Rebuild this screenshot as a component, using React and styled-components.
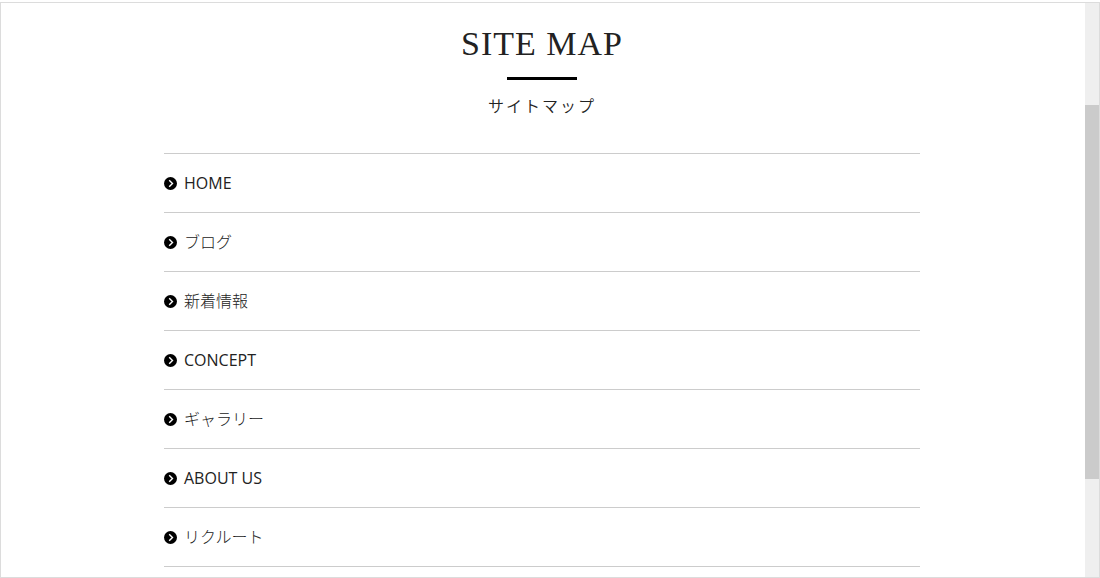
import styled, { createGlobalStyle } from "styled-components";

//Japanese labels are set in a lighter weight than the latin ones
const links = [
    { name: "HOME" },
    { name: "ブログ", light: true },
    { name: "新着情報", light: true },
    { name: "CONCEPT" },
    { name: "ギャラリー", light: true },
    { name: "ABOUT US" },
    { name: "リクルート", light: true },
];

const App = () => {
    return (
        <>
            <GlobalStyle />
            <Frame>
                <Content>
                    <Header>
                        <h1>SITE MAP</h1>
                        <p>サイトマップ</p>
                    </Header>
                    <nav aria-label="サイトマップ">
                        <LinkList>
                            {links.map(({ name, light }) => (
                                <li key={name}>
                                    <SiteLink href="#" $light={light}>
                                        <ArrowIcon />
                                        {name}
                                    </SiteLink>
                                </li>
                            ))}
                        </LinkList>
                    </nav>
                </Content>
                <ScrollTrack aria-hidden="true">
                    <ScrollThumb />
                </ScrollTrack>
            </Frame>
        </>
    )
}

const ArrowIcon = () => (
    <svg width="13" height="13" viewBox="0 0 13 13" aria-hidden="true">
        <circle cx="6.5" cy="6.5" r="6.5" fill="#000" />
        <path d="M5.2 3.2L8.5 6.5L5.2 9.8" fill="none" stroke="#fff" strokeWidth="1.4" />
    </svg>
)

export default App;

const GlobalStyle = createGlobalStyle`

    *{
        box-sizing:border-box;
    }

    body{
        margin:0;
        padding-top:2px;
        background-color:#fff;
        color:#222;
        font-family:"Open Sans","Noto Sans CJK JP",sans-serif;
        font-size:16px;
    }
`

const Frame=styled.div`
    display:flex;
    height:calc(100vh - 2px);
    border:1px solid #dcdcdc;
    overflow:hidden;
`

const Content=styled.main`
    flex:1;
    padding:20px 165px 0 163px;
`

const Header=styled.header`
    display:flex;
    flex-direction:column;
    align-items:center;
    padding-bottom:36px;

    h1{
        margin:0;
        font-family:"Liberation Serif","Times New Roman",serif;
        font-size:34px;
        font-weight:400;
        line-height:42px;
        letter-spacing:1px;
    }

    h1::after{
        content:"";
        display:block;
        width:70px;
        height:3px;
        margin:12px auto 0;
        background-color:#000;
    }

    p{
        margin:13px 0 0;
        font-family:"Noto Sans CJK JP",sans-serif;
        font-weight:350;
        line-height:24px;
        letter-spacing:2px;
    }
`

const LinkList=styled.ul`
    margin:0;
    padding:0;
    list-style:none;
    border-top:1px solid #ccc;

    li{
        border-bottom:1px solid #ccc;
    }
`

const SiteLink=styled.a`
    display:flex;
    align-items:center;
    gap:7px;
    padding:17px 0;
    line-height:24px;
    font-weight:${(props)=>(props.$light ? 300:400)};
    color:inherit;
    text-decoration:none;
`

const ScrollTrack=styled.div`
    display:grid;
    grid-template-rows:102fr 374fr 98fr;
    width:14px;
    background-color:#efefef;
`

const ScrollThumb=styled.div`
    grid-row:2;
    background-color:#cbcbcb;
`
